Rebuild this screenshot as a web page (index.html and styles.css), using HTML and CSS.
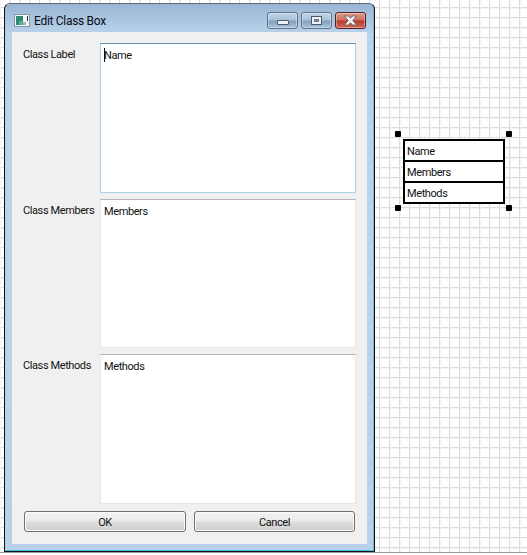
FILE: index.html
```html
<!DOCTYPE html>
<html lang="en">
<head>
    <meta charset="UTF-8">
    <meta name="viewport" content="width=device-width, initial-scale=1.0">
    <title>Edit Class Box</title>
    <link rel="stylesheet" href="styles.css">
</head>
<body>
    <div class="canvas">
        <div class="window">
            <div class="titlebar">
                <svg class="app-icon" width="16" height="14" viewBox="0 0 16 14">
                    <rect x="0.5" y="0.5" width="15" height="12" fill="#f4f6f8" stroke="#8a949c"/>
                    <rect x="2" y="2" width="7" height="9" fill="#2f8a78"/>
                    <rect x="5" y="7" width="4" height="4" fill="#59b08c"/>
                    <rect x="9" y="8" width="3" height="3" fill="#9fb4c0"/>
                    <rect x="13" y="2" width="1" height="5" fill="#1d2f3a"/>
                </svg>
                <span class="title">Edit Class Box</span>
                <div class="caption-buttons">
                    <div class="caption-btn">
                        <span class="glyph-min"></span>
                    </div>
                    <div class="caption-btn">
                        <span class="glyph-max"></span>
                    </div>
                    <div class="caption-btn close">
                        <svg width="17" height="11" viewBox="0 0 17 11">
                            <path d="M2.5 1 H6.5 L8.5 3.2 L10.5 1 H14.5 L10.8 5.5 L14.5 10 H10.5 L8.5 7.8 L6.5 10 H2.5 L6.2 5.5 Z" fill="#f2f2f2" stroke="#5d5560" stroke-width="0.8"/>
                        </svg>
                    </div>
                </div>
            </div>

            <div class="panel">
                <div class="form">
                    <label class="label">Class Label</label>
                    <div class="field focused tall"><span class="caret"></span>Name</div>
                    <label class="label">Class Members</label>
                    <div class="field">Members</div>
                    <label class="label">Class Methods</label>
                    <div class="field tall">Methods</div>
                </div>
                <div class="actions">
                    <button class="btn">OK</button>
                    <button class="btn">Cancel</button>
                </div>
            </div>
        </div>

        <!-- selected class box on the diagram -->
        <div class="class-box">
            <div class="class-row">Name</div>
            <div class="class-row">Members</div>
            <div class="class-row">Methods</div>
        </div>
        <span class="handle h-tl"></span>
        <span class="handle h-tr"></span>
        <span class="handle h-bl"></span>
        <span class="handle h-br"></span>
    </div>
</body>
</html>
```

FILE: styles.css
```css
body {
    margin: 0;
    font-family: Roboto, "Liberation Sans", sans-serif;
    font-size: 11px;
    letter-spacing: -0.4px;
    color: #111;
    background: #fff;
}

.canvas {
    position: relative;
    box-sizing: border-box;
    height: 553px;
    padding: 3px 0 0 4px;
    border-bottom: 1px solid #999;
    overflow: hidden;
    background-color: #fff;
    background-image:
        linear-gradient(to right, #dcdcdc 1px, #f4f4f4 1px, #f4f4f4 2px, transparent 2px),
        linear-gradient(to bottom, #dcdcdc 1px, #f4f4f4 1px, #f4f4f4 2px, transparent 2px);
    background-size: 10px 10px;
    background-position: 9px 0, 0 7px;
}

.window {
    box-sizing: border-box;
    width: 371px;
    height: 549px;
    padding: 0 7px 7px;
    border: 1px solid #111;
    border-top-color: #5f6c78;
    border-radius: 6px 6px 0 0;
    background: linear-gradient(to bottom, #9ab6d3 0, #b9d3ec 30px, #b9d2ea 100%);
    box-shadow: inset 0 -1px 0 #3fc0e6, inset -1px 0 0 #6fb4dc;
}

.titlebar {
    display: flex;
    align-items: flex-start;
    height: 28px;
}

.app-icon {
    margin: 10px 0 0 2px;
}

.title {
    margin: 9px 0 0 4px;
    font-size: 12px;
    line-height: 16px;
    letter-spacing: -0.3px;
    color: #0c0c14;
}

.caption-buttons {
    display: flex;
    gap: 3px;
    margin: 8px 1px 0 auto;
}

.caption-btn {
    display: flex;
    align-items: center;
    justify-content: center;
    box-sizing: border-box;
    width: 31px;
    height: 17px;
    border: 1px solid #5f7288;
    border-radius: 3px;
    background: linear-gradient(to bottom, #c3d5e6 0, #a8c0d8 48%, #7f9fbd 52%, #a9c4dc 100%);
    box-shadow: inset 0 0 0 1px rgba(255, 255, 255, 0.35);
}

.caption-btn.close {
    border-color: #5a1f24;
    background: linear-gradient(to bottom, #dd9c8e 0, #cf6f60 48%, #b83a2c 52%, #cf6a58 100%);
}

.glyph-min {
    width: 10px;
    height: 3px;
    margin-top: 3px;
    border: 1px solid #4e5a68;
    border-radius: 1px;
    background: #f0f2f4;
}

.glyph-max {
    display: block;
    box-sizing: border-box;
    width: 9px;
    height: 7px;
    border: 2px solid #eef1f4;
    outline: 1px solid #4e5a68;
    background: #6d8099;
}

.panel {
    box-sizing: border-box;
    height: 512px;
    padding: 11px 11px 0;
    background: #f0f0f0;
}

.form {
    display: grid;
    grid-template-columns: 77px 256px;
    row-gap: 6px;
}

.label {
    padding-top: 4px;
    line-height: 15px;
}

.field {
    position: relative;
    box-sizing: border-box;
    height: 149px;
    padding: 4px 3px;
    line-height: 15px;
    background: #fff;
    border: 1px solid #e6e6e6;
    border-top-color: #b4b4b4;
}

.field.tall {
    height: 150px;
}

.field.focused {
    border-color: #a8d0ea;
    border-top-color: #5c90b8;
}

.caret {
    position: absolute;
    left: 3px;
    top: 4px;
    width: 1px;
    height: 14px;
    background: #111;
}

.actions {
    display: grid;
    grid-template-columns: 162px 161px;
    column-gap: 8px;
    margin: 7px 0 0 1px;
}

.btn {
    height: 21px;
    padding: 1px 0 0;
    font: inherit;
    letter-spacing: inherit;
    color: #111;
    border: 1px solid #707070;
    border-radius: 3px;
    background: linear-gradient(to bottom, #f2f2f2 0, #ebebeb 48%, #dddddd 52%, #cfcfcf 100%);
    box-shadow: inset 0 0 0 1px #fbfbfb;
}

.class-box {
    position: absolute;
    left: 403px;
    top: 139px;
    box-sizing: border-box;
    width: 102px;
    border: 2px solid #000;
    background: #fff;
}

.class-row {
    box-sizing: border-box;
    height: 21px;
    padding: 1px 0 0 2px;
    line-height: 19px;
    border-bottom: 2px solid #000;
}

.class-row:last-child {
    height: 19px;
    border-bottom: 0;
}

.handle {
    position: absolute;
    width: 6px;
    height: 6px;
    border-radius: 1px;
    background: #000;
}

.h-tl { left: 395px; top: 131px; }
.h-tr { left: 506px; top: 131px; }
.h-bl { left: 395px; top: 205px; }
.h-br { left: 506px; top: 205px; }
```
